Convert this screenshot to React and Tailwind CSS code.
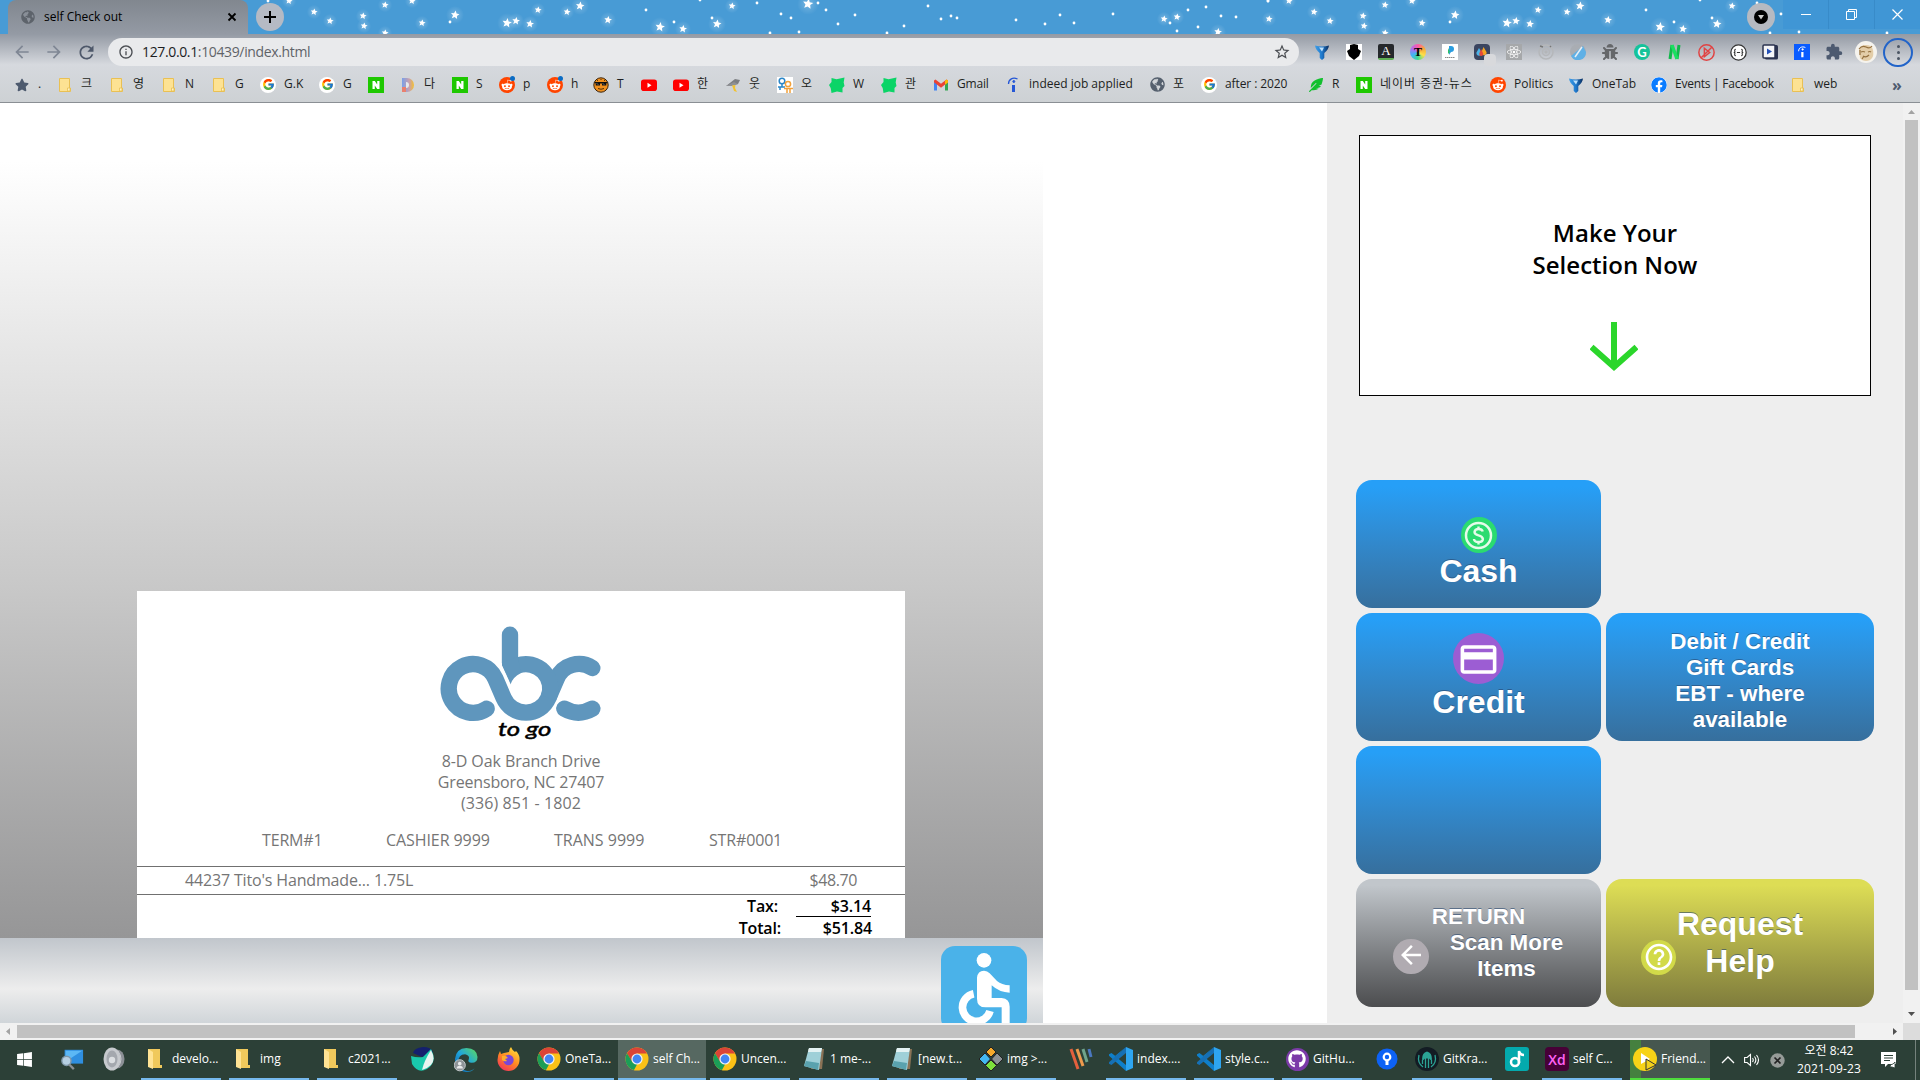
import React from "react";
import {
  FaRedditAlien, FaYoutube, FaFacebook, FaReact, FaPuzzlePiece, FaBug, FaGithub,
  FaFirefoxBrowser, FaEdge, FaGlobeAmericas, FaStar, FaFeatherAlt, FaWindows,
} from "react-icons/fa";
import { FcGoogle } from "react-icons/fc";
import { MdArrowBack, MdArrowForward, MdRefresh, MdCreditCard, MdExtension, MdHelpOutline, MdStarBorder, MdInfoOutline } from "react-icons/md";

const STARS = [
  [289, 1, 4], [314, 12, 4], [330, 21, 4], [363, 16, 4], [364, 26, 4], [385, 5, 4], [385, 33, 4], [412, 1, 4],
  [422, 23, 4], [455, 15, 5], [507, 23, 5.5], [516, 21, 4.5], [530, 24, 4.5], [538, 10, 4], [567, 12, 4], [580, 6, 5],
  [608, 20, 4.5], [660, 27, 5.5], [683, 29, 4.5], [717, 24, 5], [732, 6, 4], [808, 4, 6], [1164, 19, 4],
  [1177, 17, 4], [1218, 32, 4.5], [1269, 19, 4],
];
const DOTS = [
  [268, 1], [450, 22], [646, 10], [674, 22], [712, 18], [700, 0], [757, 3], [781, 14], [791, 18], [818, 3], [826, 10],
  [838, 24], [855, 15], [904, 26], [928, 6], [941, 19], [951, 16], [957, 18], [1016, 20], [1045, 24], [1060, 15],
  [1074, 23], [1113, 14], [1170, 23], [1177, 31], [1188, 10], [1198, 27], [1206, 7], [1221, 16], [1236, 17], [1268, 1],
  [770, 33], [799, 32], [887, 33],
];

const starPath = (cx, cy, r) => {
  let d = "";
  for (let i = 0; i < 10; i++) {
    const a = -Math.PI / 2 + 0.15 + (i * Math.PI) / 5;
    const q = i % 2 ? r * 0.46 : r;
    d += (i ? "L" : "M") + (cx + q * Math.cos(a)).toFixed(1) + " " + (cy + q * Math.sin(a)).toFixed(1);
  }
  return d + "Z";
};

function Sky() {
  return (
    <svg className="absolute inset-0" width="1920" height="34" viewBox="0 0 1920 34">
      <defs>
        <radialGradient id="glow">
          <stop offset="0" stopColor="#fff" stopOpacity=".25" />
          <stop offset="1" stopColor="#fff" stopOpacity="0" />
        </radialGradient>
      </defs>
      {[0, 1000].map((o) => (
        <g key={o} transform={`translate(${o} 0)`} fill="#fff">
          {STARS.map(([x, y, r]) => (
            <g key={x + "-" + y}>
              <circle cx={x} cy={y} r={r * 1.8} fill="url(#glow)" />
              <path d={starPath(x, y, r * 0.9)} />
            </g>
          ))}
          {DOTS.map(([x, y]) => <circle key={x} cx={x} cy={y} r="1.4" />)}
        </g>
      ))}
    </svg>
  );
}

/* ---------- small icons ---------- */
const Folder = () => (
  <svg width="16" height="16" viewBox="0 0 16 16">
    <path d="M2.5 1.500h10v9.500h1v3.500h-11z" fill="#fde293" stroke="#e9c054" />
    <path d="M10.500 14v-3h2.500v3z" fill="#fff3c4" stroke="#e9c054" strokeWidth=".8" />
  </svg>
);
const Google = () => <span className="flex size-4 items-center justify-center rounded-full bg-white"><FcGoogle size={13} /></span>;
const Naver = () => (
  <svg width="16" height="16" viewBox="0 0 16 16"><path d="M0 0h16v16H0z" fill="#1ec800" /><path d="M4.500 12V4h2.300l2.400 3.600V4h2.300v8H9.200L6.800 8.400V12z" fill="#fff" /></svg>
);
const Daum = () => (
  <svg width="16" height="16" viewBox="0 0 16 16">
    <defs><linearGradient id="dm"><stop offset="0" stopColor="#7aa0e8" /><stop offset=".6" stopColor="#c8a0b0" /><stop offset="1" stopColor="#f5c02c" /></linearGradient></defs>
    <path d="M2 1h5a7 7 0 0 1 0 14H2z" fill="url(#dm)" /><path d="M2 10h4v5H2z" fill="#e9806e" /><path d="M6 5v6a3 3 0 0 0 0-6z" fill="#e6e8ea" />
  </svg>
);
const Reddit = ({ dot }) => (
  <span className="relative flex size-4 items-center justify-center rounded-full bg-[#ff4500] text-white">
    <FaRedditAlien size={12} />
    {dot && <span className="absolute -top-px right-0 size-[5px] rounded-full bg-[#0b6cc4]" />}
  </span>
);
const Face = () => (
  <svg width="16" height="16" viewBox="0 0 16 16"><circle cx="8" cy="8" r="7.200" fill="#f0901e" stroke="#3b2208" strokeWidth="1" /><path d="M1.500 5h13v1.200h-1.200V8.500H9V6.500H7v2H2.700V6.200H1.500z" fill="#111" /><path d="m4 6.500 1 1m5-1 1 1" stroke="#fff" strokeWidth=".7" /><path d="M5 11.500q3 1.500 6 0M4 3l1 .8M8 2v1M12 3l-1 .8" stroke="#3b2208" fill="none" strokeWidth=".9" /></svg>
);
const YouTube = () => (
  <svg width="16" height="16" viewBox="0 0 16 16"><rect y="2.500" width="16" height="11.500" rx="2.800" fill="#f00" /><path d="M6.500 5.800v5l4-2.500z" fill="#fff" /></svg>
);
const Bird = () => (
  <svg width="16" height="16" viewBox="0 0 16 16"><path d="M1 9 10 2l5 1-2 4-4 1-4 0z" fill="#7d7f82" /><path d="m1 9 8-4 4 2-6 2z" fill="#8f9194" /><path d="m7 8.500 3.500-.5-.5 3 2 4-3-1-1-3z" fill="#f2c230" /></svg>
);
const OO = () => (
  <svg width="16" height="16" viewBox="0 0 16 16"><path d="M0 0h16v16H0z" fill="#fff" /><g fill="none" strokeWidth="1.500"><circle cx="5" cy="4" r="2.800" stroke="#2a86c8" /><path d="M5 7v3M1 10h7M3 10v3" stroke="#2a86c8" /><circle cx="11" cy="7" r="2.600" stroke="#f2a13a" /><path d="M7 11.500h9M10 12v4M13 12v4" stroke="#f2a13a" /></g></svg>
);
const GreenBlob = () => <svg width="16" height="16" viewBox="0 0 16 16"><path d="m2.500 1 5 1.200L15.500.5l-.8 5 .8 3.500-2 2v4.500L8 14.500 2.500 16l-.8-5L0 8l2.500-3z" fill="#0bd467" /></svg>;
const Gmail = () => (
  <svg width="16" height="16" viewBox="0 0 16 16"><path d="M1 4v9.500h3V7z" fill="#4285f4" /><path d="M15 4v9.500h-3V7z" fill="#34a853" /><path d="M1 3.500 2.500 2.500 8 6.800l5.500-4.300L15 3.500v1.800l-7 5.500-7-5.500z" fill="#ea4335" /><path d="M12 3.700 13.500 2.500 15 3.500v2L12 7.700z" fill="#fbbc04" /></svg>
);
const Indeed = ({ light }) => (
  <svg width="16" height="16" viewBox="0 0 16 16">
    {light && <path d="M0 0h16v16H0z" fill="#0a5cff" />}
    <g stroke={light ? "#fff" : "#2557d6"} fill="none" transform={light ? "translate(2 2) scale(.75)" : undefined}><path d="M8.500 8v7" strokeWidth="3" /><path d="M3.500 7C3.500 2 8 0 12.500 2" strokeWidth="1.300" /><circle cx="8.800" cy="4.500" r="1" fill={light ? "#fff" : "#2557d6"} /></g>
  </svg>
);
const OneTab = () => (
  <svg width="16" height="16" viewBox="0 0 16 16"><defs><linearGradient id="ot"><stop offset="0" stopColor="#3f9fe8" /><stop offset=".5" stopColor="#1e78cc" /><stop offset="1" stopColor="#0a2c5c" /></linearGradient></defs><path d="M1 1.500Q8 3.500 15 1.500q-.5 4-4.700 7.500v5L8 16l-2.300-2V9Q1.500 5.500 1 1.500z" fill="url(#ot)" /><path d="M5 3.500h5L8 7.500z" fill="#bfe2fb" /></svg>
);
const Chrome = () => (
  <svg width="24" height="24" viewBox="0 0 24 24">
    <circle cx="12" cy="12" r="11.500" fill="#fbc116" /><path d="M2 6.300a11.500 11.500 0 0 1 20 .2H12l-5 8.500z" fill="#db4437" /><path d="M2 6.300 7.300 15l4.700 2.500-3 5.600A11.500 11.500 0 0 1 2 6.300z" fill="#1b9e58" />
    <circle cx="12" cy="12" r="5.600" fill="#f3f3f3" /><circle cx="12" cy="12" r="4.400" fill="#4285f4" />
  </svg>
);

/* ---------- browser chrome ---------- */
const bookmarks = [
  ["w-[43px]", <FaStar size={14} color="#4d5a6e" />, "."],
  ["w-[52px]", <Folder />, "크"], ["w-[52px]", <Folder />, "영"], ["w-[50px]", <Folder />, "N"], ["w-[49px]", <Folder />, "G"],
  ["w-[59px]", <Google />, "G.K"], ["w-[49px]", <Google />, "G"], ["w-[32px]", <Naver />, ""], ["w-[52px]", <Daum />, "다"],
  ["w-[47px]", <Naver />, "S"], ["w-[48px]", <Reddit dot />, "p"], ["w-[46px]", <Reddit dot />, "h"], ["w-[48px]", <Face />, "T"],
  ["w-[32px]", <YouTube />, ""], ["w-[52px]", <YouTube />, "한"], ["w-[52px]", <Bird />, "웃"], ["w-[52px]", <OO />, "오"],
  ["w-[52px]", <GreenBlob />, "W"], ["w-[52px]", <GreenBlob />, "관"], ["w-[72px]", <Gmail />, "Gmail", "-tracking-[0.2px]"],
  ["w-[144px]", <Indeed />, "indeed job applied"], ["w-[52px]", <FaGlobeAmericas size={15} color="#55606e" />, "포"],
  ["w-[107px]", <Google />, "after : 2020", "-tracking-[0.1px]"], ["w-[48px]", <FaFeatherAlt size={14} color="#12c02e" />, "R"],
  ["w-[134px]", <Naver />, "네이버 증권-뉴스", "tracking-[0.95px]"], ["w-[78px]", <Reddit />, "Politics"], ["w-[83px]", <OneTab />, "OneTab"],
  ["w-[139px]", <FaFacebook size={16} color="#0a7cff" className="rounded-full bg-white" />, "Events | Facebook", "tracking-[-0.25px]"], ["w-[80px]", <Folder />, "web"],
];

const ext = [
  <OneTab />,
  <svg width="16" height="16" viewBox="0 0 16 16"><path d="M0 0h16v16H0z" fill="#fff" /><path d="m4 1 4-1 4 1v4l3 2-2 5-5 4-5-4-2-5 3-2z" /></svg>,
  <span className="flex size-4 items-start justify-center rounded-xs border-b-2 border-[#5fae54] bg-[#25282c] font-['Liberation_Serif'] text-[13px] leading-[13px] text-white">A</span>,
  <span className="flex size-4 items-center justify-center rounded-full bg-[conic-gradient(#ff5aa8,#f7a93a,#ffe04a,#41d98f,#3fb6f5,#b36cf0,#ff5aa8)] font-['Liberation_Serif'] text-[12px] font-bold leading-4">T</span>,
  <svg width="16" height="16" viewBox="0 0 16 16"><path d="M0 0h16v16H0z" fill="#fff" /><path d="M7 2h2a3 3 0 0 1 0 6l-2 3z" fill="#2a9de0" /><path d="M6 4v6l2-2z" fill="#2fc06a" /><path d="M3 13.500h10" stroke="#888" strokeDasharray="1.500 .5" /></svg>,
  <span className="relative size-4 rounded-sm bg-[#3b4560]"><svg width="16" height="16" viewBox="0 0 16 16"><path d="M5 4 2.500 8.500a2.600 2.600 0 1 0 5 0z" fill="#4cb4e8" /><path d="M9.500 3 7.500 8a2.600 2.600 0 1 0 5 0z" fill="#f5a524" /><path d="M7 5 5.500 9a2 2 0 1 0 3.500 0z" fill="#e64a3a" /></svg><span className="absolute left-2.5 top-2.5 h-3 w-3 rounded-sm bg-[#d8d9dc]" /></span>,
  <span className="flex size-4 items-center justify-center bg-[#a6a8aa] text-white"><FaReact size={14} /></span>,
  <svg width="16" height="16" viewBox="0 0 16 16" fill="none" stroke="#b5b7ba" strokeWidth="1.500"><circle cx="8" cy="8" r="7" /><circle cx="8" cy="8" r="3.500" /><circle cx="8" cy="8" r="1" fill="#888" /><path d="m2 2 3 1M12 3l1-1" stroke="#777" /></svg>,
  <svg width="16" height="16" viewBox="0 0 16 16"><circle cx="8" cy="8" r="8" fill="#a9adb3" /><path d="M1 12 13 2l3 6a8 8 0 0 1-15 4z" fill="#5fb0e6" /><path d="M5 13 12 3" stroke="#e7eef4" strokeWidth="1.500" /></svg>,
  <FaBug size={16} color="#65676a" />,
  <span className="flex size-4 items-center justify-center rounded-full bg-[#15c39a] font-['Lato'] text-[13px] font-bold leading-4 text-white">G</span>,
  <svg width="16" height="16" viewBox="0 0 16 16" fill="none"><path d="M4 15 6 1M11 15l2-14" stroke="#10b84a" strokeWidth="3" /><path d="m6 1 5 14" stroke="#19e060" strokeWidth="3.400" /></svg>,
  <svg width="17" height="17" viewBox="0 0 16 16" fill="none" stroke="#e04444" strokeWidth="1.400"><circle cx="8" cy="8" r="7.200" /><path d="M3 13 13 3M6 4v8l5-4z" /></svg>,
  <svg width="17" height="17" viewBox="0 0 16 16" fill="none" stroke="#333" strokeWidth="1.200"><circle cx="8" cy="8" r="7.200" fill="#fff" /><path d="M5.500 5Q4 5 4.500 6.500T3.500 8Q5 8 4.500 9.500T5.500 11M10.500 5q1.500 0 1 1.500t1 1.500Q11 8 11.500 9.500t-1 1.500M6.500 8h3" strokeWidth="1" /></svg>,
  <svg width="16" height="16" viewBox="0 0 16 16"><rect x="3" y="1" width="13" height="14.500" rx="1.500" fill="#2b3350" /><rect x="1" y="1" width="12" height="13" rx="1" fill="#f4f5f8" stroke="#2b3350" strokeWidth="1.500" /><path d="M5 4.500v6l5-3z" fill="#2451b8" /></svg>,
  <Indeed light />,
  <MdExtension size={18} color="#4d5a70" />,
  <svg width="22" height="22" viewBox="0 0 22 22"><circle cx="11" cy="11" r="11" fill="#f5f3ee" /><path d="M4 9q1-5 7-5t7 5-1 8-6 3-6-3z" fill="#e3cda8" /><path d="M4 8q3-4 7-2t6-1M6 11q2-1 4 0m3 0q2-1 3 0M8 15q3 2 6-1M7 18l2-3M5 9v5" stroke="#94703f" fill="none" strokeWidth="1.200" /></svg>,
  <span className="flex h-[29px] w-[30px] flex-col items-center justify-center gap-[3px] rounded-full border-2 border-[#2264c9]"><i className="size-[3px] rounded-full bg-[#4b5563]" /><i className="size-[3px] rounded-full bg-[#4b5563]" /><i className="size-[3px] rounded-full bg-[#4b5563]" /></span>,
];

function TabStrip() {
  return (
    <div className="relative h-[34px] bg-[#489bd5]">
      <Sky />
      <div className="relative flex h-full items-center">
        <div className="ml-2 flex h-full w-60 items-center rounded-t-lg bg-linear-to-b from-[#81878f] to-[#949aa4] pl-[13px] pr-[10px]">
          <FaGlobeAmericas size={14} color="#5d636b" />
          <span className="ml-[9px] grow text-[12px]">self Check out</span>
          <svg width="12" height="12" viewBox="0 0 12 12"><path d="m2.500 2.500 7 7m0-7-7 7" stroke="#000" strokeWidth="1.800" /></svg>
        </div>
        <div className="ml-2 flex size-7 items-center justify-center rounded-full bg-[#b5bac4]">
          <svg width="14" height="14" viewBox="0 0 14 14"><path d="M7 1v12M1 7h12" stroke="#000" strokeWidth="2" /></svg>
        </div>
        <div className="grow" />
        <div className="mr-2 flex size-7 items-center justify-center rounded-full bg-[#b7bac1]">
          <svg width="14" height="14" viewBox="0 0 14 14"><circle cx="7" cy="7" r="7" /><path d="M4 5h6l-3 4.500z" fill="#ccc" /></svg>
        </div>
        <div className="flex h-[29px] items-center self-start bg-[#4096d5]">
          <div className="flex h-full w-[46px] items-center justify-center border-r border-[#388bc9]"><span className="h-px w-[10px] bg-white" /></div>
          <div className="flex h-full w-[46px] items-center justify-center border-r border-[#388bc9]">
            <svg width="11" height="11" viewBox="0 0 11 11" fill="none" stroke="#fff"><path d="M.5 2.500h8v8h-8zM2.500 2.500v-2h8v8h-2" /></svg>
          </div>
          <div className="flex h-full w-[45px] items-center justify-center"><svg width="11" height="11" viewBox="0 0 11 11" stroke="#fff" strokeWidth="1.200"><path d="m.5.5 10 10m0-10-10 10" /></svg></div>
        </div>
      </div>
    </div>
  );
}

function Toolbar() {
  return (
    <div className="flex h-[69px] flex-col border-b border-[#8a8f94] bg-linear-to-b from-[#949aa4] via-[#d6d9de] via-45% to-[#cdd1d4]">
      <div className="flex h-9 items-center">
        <div className="flex w-[108px] items-center pl-3">
          <MdArrowBack size={20} color="#7f8794" /><MdArrowForward size={20} color="#7f8794" className="ml-3" /><MdRefresh size={21} color="#4e586a" className="ml-3" />
        </div>
        <div className="flex h-7 w-[1191px] items-center rounded-full bg-[#e9eaec] pl-[10px] pr-2">
          <MdInfoOutline size={16} color="#4a4d52" />
          <span className="mb-px ml-2 grow text-[14px] tracking-[-0.36px] text-[#5f6368]"><span className="text-[#1c1d1f]">127.0.0.1</span>:10439/index.html</span>
          <MdStarBorder size={18} color="#4a4d52" />
        </div>
        <div className="ml-[7px] flex">
          {ext.map((e, i) => <div key={i} className="flex h-[30px] w-8 items-center justify-center">{e}</div>)}
        </div>
      </div>
      <div className="flex h-[29px] items-center pl-[14px] text-[12px] text-[#1d1f22]">
        {bookmarks.map(([w, icon, label, extra], i) => (
          <div key={i} className={`flex shrink-0 items-center gap-2 whitespace-nowrap ${w} ${extra || ""}`}>
            <span className="flex size-4 shrink-0 items-center justify-center">{icon}</span>
            <span className="pb-px">{label}</span>
          </div>
        ))}
        <span className="ml-[22px] text-[16px] font-bold leading-4 text-[#4d5a6e]">»</span>
      </div>
    </div>
  );
}

/* ---------- receipt ---------- */
function Logo() {
  return (
    <svg width="180" height="135" viewBox="0 0 540 405" className="block">
      <g fill="none" stroke="#5f96bd" strokeWidth="49" strokeLinecap="round">
        <path d="M170 278A73 73 0 1 1 196 188L221 246A73 73 0 0 0 355 246L380 188A73 73 0 0 1 487 156" />
        <path d="M403 278Q445 302 487 278" />
        <path d="M262 149A73 73 0 0 1 355 246" strokeLinecap="butt" />
        <path d="M240 56V140" />
      </g>
      <path d="M216 140V150L241 206Q250 182 272 172L264 122Z" fill="#5f96bd" />
      <path d="M212 146 243 213" stroke="#fff" strokeWidth="5" />
      <text x="204" y="360" fontFamily="'Lato', sans-serif" fontStyle="italic" fontWeight="400" fontSize="60" stroke="#000" strokeWidth="1.500" textLength="160" lengthAdjust="spacingAndGlyphs">to go</text>
    </svg>
  );
}

function Receipt() {
  return (
    <div className="ml-[137px] h-[347px] w-[768px] shrink-0 overflow-hidden bg-white text-[16px] leading-[21px] tracking-[-0.16px] text-[#757575]">
      <div className="flex flex-col items-center pt-[25px]">
        <div className="-ml-[2px] h-[135px]"><Logo /></div>
        <span className="tracking-[-0.08px]">8-D Oak Branch Drive</span>
        <span>Greensboro, NC 27407</span>
        <span className="tracking-[0.1px]">(336) 851 - 1802</span>
      </div>
      <div className="mt-4 flex h-[36px] pl-[125px]">
        <span className="w-[124px]">TERM#1</span>
        <span className="w-[168px] tracking-[-0.08px]">CASHIER 9999</span>
        <span className="w-[155px] tracking-normal">TRANS 9999</span>
        <span>STR#0001</span>
      </div>
      <div className="flex h-[29px] items-center justify-between border-y border-[#707070] pl-12 pr-12">
        <span>44237 Tito's Handmade... 1.75L</span><span className="tracking-[-0.4px]">$48.70</span>
      </div>
      <div className="flex justify-end pr-[34px] font-semibold text-black">
        <span className="pt-px">Tax:</span>
        <span className="ml-[18px] h-[22px] w-[75px] border-b border-black pt-px text-right">$3.14</span>
      </div>
      <div className="flex justify-end pr-[33px] pt-px font-semibold text-black">
        <span>Total:</span><span className="ml-4 w-[75px] text-right">$51.84</span>
      </div>
    </div>
  );
}

function Wheelchair() {
  return (
    <svg width="86" height="78" viewBox="33 33 258 234" className="block">
      <rect x="33" y="33" width="258" height="258" rx="42" fill="#4ab2e9" />
      <circle cx="162" cy="76" r="22" fill="#fff" />
      <path d="M141 128q2-21 21-21 10 0 17 8l22 23q14 12 38 13v22q-30 0-54-22v38h30q24 2 24 26v60h-24v-58h-48q-26 0-26-26z" fill="#fff" />
      <path d="M131 176A42 42 0 1 0 180 228" fill="none" stroke="#fff" strokeWidth="23" />
    </svg>
  );
}

/* ---------- side panel ---------- */
const btn = "flex flex-col items-center justify-center rounded-2xl font-['Liberation_Sans'] font-bold text-white [text-shadow:0_-1px_0_rgba(40,70,110,.6)]";
const blue = "bg-linear-to-b from-[#269ff7] from-5% to-[#366f9d]";

function SidePanel() {
  return (
    <div className="w-[576px] bg-[#eee] pl-[29px] pt-8">
      <div className="ml-[3px] flex h-[261px] w-[512px] flex-col items-center border border-black bg-white pt-[81px] text-[24px] font-semibold leading-8 text-black">
        <span>Make Your</span><span>Selection Now</span>
        <svg width="48" height="49" viewBox="0 0 48 49" className="mt-[41px] -ml-[2px]"><path d="M24 0v44M1.500 25 24 45l22.500-20" fill="none" stroke="#2bd62b" strokeWidth="6" /></svg>
      </div>
      <div className="mt-[84px] grid grid-cols-[245px_268px] auto-rows-[128px] gap-[5px] text-[32px] leading-[37px]">
        <div className={`${btn} ${blue} pt-[19px]`}>
          <svg width="36" height="36" viewBox="0 0 36 36"><circle cx="18" cy="18" r="18" fill="#2bdb70" /><circle cx="17.500" cy="18.500" r="12.500" fill="none" stroke="#e6fbea" strokeWidth="2.500" /><path d="M21.800 14.500Q21 12 17.500 12T13.500 15q0 2.500 4 3.400t4.400 3.600q0 3-4.400 3t-4.500-3M17.500 9.500V12M17.500 25v2.500" fill="none" stroke="#e6fbea" strokeWidth="2.400" /></svg>
          <span>Cash</span>
        </div>
        <div />
        <div className={`${btn} ${blue}`}>
          <span className="flex size-[51px] items-center justify-center rounded-full bg-[#9c5dd3] pt-0.5"><MdCreditCard size={43} /></span>
          <span>Credit</span>
        </div>
        <div className={`${btn} ${blue} pt-2 text-[22.4px] leading-[26px]`}>
          <span>Debit / Credit</span><span>Gift Cards</span><span>EBT - where</span><span>available</span>
        </div>
        <div className={`${btn} ${blue}`} />
        <div />
        <div className={`${btn} relative bg-linear-to-b from-[#c1c6cb] from-5% to-[#4c4d4f] text-[22.4px] leading-[26px]`}>
          <span>RETURN</span><span className="ml-[56px]">Scan More</span><span className="ml-[56px]">Items</span>
          <span className="absolute left-[37px] top-[60px] flex h-[35px] w-9 items-center justify-center rounded-full bg-[#b0abb1] pb-[3px]"><MdArrowBack size={30} /></span>
        </div>
        <div className={`${btn} relative bg-linear-to-b from-[#dddd55] from-5% to-[#7f7c3c]`}>
          <span>Request</span><span>Help</span>
          <span className="absolute left-[35px] top-[61px] flex size-[35px] items-center justify-center rounded-full bg-[#d2da49] pb-px"><MdHelpOutline size={32} /></span>
        </div>
      </div>
    </div>
  );
}

const Tri = ({ d, c }) => <svg width="17" height="17" viewBox="0 0 17 17"><path d={d} fill={c} /></svg>;

/* ---------- task bar ---------- */
const TFolder = () => <svg width="16" height="22" viewBox="0 0 16 22" className="mr-0.5"><path d="M1 1h12v16h2v3H4z" fill="#f0c95c" /><path d="M1 1l5 3v17l-5-2z" fill="#ffe394" /></svg>;
const Notepad = () => <svg width="24" height="24" viewBox="0 0 24 24"><path d="M6 2h16l-2 20H9z" fill="#8a7256" /><path d="M7 1h13l-3 22-15-4z" fill="#9fd0d8" /><path d="m7 1 13 0-1 4-13 0z" fill="#e3f2f3" /><path d="M4 14 17 16l-1 7-14-4z" fill="#5aa2ae" /></svg>;
const VSCode = () => <svg width="24" height="24" viewBox="0 0 24 24"><path d="M17 0 7 9.500 2.500 6 0 7.300v1.500l17 15.200V18L6 9z" fill="#0f7fcb" /><path d="M17 0v6L2.500 18 0 16.700v-1.500z" fill="#1670b5" /><path d="m17 0 7 3v18l-7 3z" fill="#2ea5f0" /></svg>;

const tasks = [
  ["w-12", <FaWindows size={17} color="#fff" />],
  ["w-12", <svg width="26" height="26" viewBox="0 0 26 26"><path d="M5 3h20v15H5z" fill="#2f8fe0" /><path d="M6 4h18L6 16z" fill="#5cb8f5" /><circle cx="7" cy="15" r="5" fill="#b6cfe2" stroke="#7f97a8" strokeWidth="1.500" /><path d="m10 19 5 5" stroke="#8c8f93" strokeWidth="2.500" /></svg>],
  ["w-9", <svg width="22" height="24" viewBox="0 0 22 24"><ellipse cx="14" cy="12" rx="7.500" ry="9.500" fill="#8c9096" /><path d="M15 4q6 8 0 16M12 3q6 9 0 18" stroke="#c7cace" fill="none" /><ellipse cx="9" cy="12" rx="8.500" ry="11.500" fill="#c7cace" /><ellipse cx="9" cy="12" rx="5.500" ry="8.500" fill="#a4a8ae" /><circle cx="9" cy="13" r="3.200" fill="#dcdfe2" /></svg>],
  ["w-20 ml-[9px]", <TFolder />, "develo..."], ["w-20 ml-2", <TFolder />, "img"], ["w-20 ml-2", <TFolder />, "c2021..."],
  ["w-[43px] ml-1", <svg width="24" height="24" viewBox="0 0 24 24"><path d="M2 6Q3 1 12 0q8 0 10 5L11 10z" fill="#14206e" /><path d="M0 9q6 2 12 1l8-8q7 13-4 20-9 5-15-5z" fill="#19c9ac" /><path d="M20 3q8 15-9 20 2-9 9-20z" fill="#e9f4f0" /></svg>],
  ["w-[43px]", <svg width="25" height="25" viewBox="0 0 25 25"><defs><linearGradient id="eg" x1="0" y1="1" x2="1" y2="0"><stop offset="0" stopColor="#0c59a4" /><stop offset=".5" stopColor="#1fa5dc" /><stop offset="1" stopColor="#5fdc5a" /></linearGradient></defs><path d="M1 12Q2 1 13 .5 24 1 24.500 10q0 6-6 6-5-.5-3-4 1-4-4-5-7 0-7 8 1 7 9 9.500 5 0 8-3-3 4-9 4Q1 24 1 12z" fill="url(#eg)" /><circle cx="6" cy="18.500" r="5.800" fill="#8e9498" stroke="#c4cacc" /><circle cx="6" cy="16.800" r="1.900" fill="#e7e9ea" /><path d="M2.700 22q0-3 3.300-3t3.300 3z" fill="#e7e9ea" /></svg>],
  ["w-[43px]", <svg width="23" height="24" viewBox="0 0 23 24"><defs><linearGradient id="fx" x1=".8" y1="0" x2=".2" y2="1"><stop offset="0" stopColor="#ffe03a" /><stop offset=".5" stopColor="#ff8a22" /><stop offset="1" stopColor="#f2305c" /></linearGradient></defs><path d="M3 4l1 3 3-1 5-1q0-3 2-5 1 3 4 5l1-1q4 4 3.500 9a11 11 0 0 1-22 0Q.5 8 3 4z" fill="url(#fx)" /><circle cx="11.500" cy="13" r="5.200" fill="#7a46d6" /><path d="M5 9q4-1 6 2l-3 1 2 2q-3 1-5-1z" fill="#ffae2a" /></svg>],
  ["w-20 ml-1", <Chrome />, "OneTa..."], ["w-[88px] ml-1", <Chrome />, "self Ch...", "bg-[#566861] pl-[7px]"], ["w-20 ml-1", <Chrome />, "Uncen..."],
  ["w-20 ml-[9px]", <Notepad />, "1 me-..."], ["w-20 ml-2", <Notepad />, "[new.t..."],
  ["w-20 ml-[9px]", <svg width="24" height="24" viewBox="0 0 24 24" stroke="#222"><path d="m12 0 5 5-5 5-5-5z" fill="#f5a92c" /><path d="m6 6 5.500 6L6 18 0 12z" fill="#43b7f2" /><path d="m18 6 6 6-6 6-5.500-6z" fill="#8c9296" /><path d="m12 13 5.500 5.500L12 24l-5.500-5.500z" fill="#7de03c" /></svg>, "img >..."],
  ["w-[43px] ml-[3px]", <svg width="24" height="24" viewBox="0 0 24 24" strokeWidth="3" fill="none"><path d="m2 2 7 20" stroke="#e5603d" /><path d="m8 2 6 17" stroke="#ee9a4d" /><path d="m14 2 4 13" stroke="#6fa48c" /><path d="m20 2 2 8" stroke="#4b78c0" /></svg>],
  ["w-20 ml-1", <VSCode />, "index...."], ["w-20 ml-2", <VSCode />, "style.c..."],
  ["w-20 ml-2", <span className="flex size-[23px] items-center justify-center rounded-full bg-[#7b3aa8] text-white"><FaGithub size={18} /></span>, "GitHu..."],
  ["w-[43px] ml-[3px]", <svg width="22" height="22" viewBox="0 0 22 22"><circle cx="11" cy="11" r="10.500" fill="#0d62f5" /><circle cx="11" cy="9" r="3.300" fill="none" stroke="#fff" strokeWidth="2.200" /><path d="M11 12v5" stroke="#fff" strokeWidth="3" /></svg>],
  ["w-20 ml-1", <svg width="24" height="24" viewBox="0 0 24 24" fill="none"><circle cx="12" cy="12" r="12" fill="#131c24" /><path d="M7 12.500q0-7 5-8 5 1 5 8-1 1-2 0l-1-1h-4l-1 1q-1 1-2 0" fill="#2ba395" /><path d="M10.500 11v10m3-10v10M4 8q-2 8 4 12M20 8q2 8-4 12M7.500 13v4M16.500 13v4" stroke="#2ba395" strokeWidth="1.300" /></svg>, "GitKra..."],
  ["w-[43px] ml-[3px]", <svg width="24" height="24" viewBox="0 0 24 24" fill="none"><rect width="24" height="24" rx="3" fill="#04aaad" /><circle cx="10" cy="15" r="4" stroke="#fff" strokeWidth="2.500" /><path d="M14 16V4q1 4 5 4" stroke="#fff" strokeWidth="2.500" /></svg>],
  ["w-20 ml-1", <span className="flex size-6 items-center justify-center rounded-sm bg-[#470137] text-[14px] font-semibold text-[#ff61f6]">Xd</span>, "self C..."],
  ["w-20 ml-2", <svg width="24" height="24" viewBox="0 0 24 24"><circle cx="12" cy="12" r="12" fill="#f7d317" /><path d="M8 6v11l9-5z" fill="#fff" /><path d="m13 12 10 6-10 5z" fill="#f2d21c" stroke="#333" /></svg>, "Friend...", "pl-[3px] bg-linear-to-r from-[#45803f] from-14% to-[#46574f] to-14%", "bg-[#4fdc3d]"],
];

function Taskbar() {
  return (
    <div className="flex h-10 bg-[#2c4037] text-[12px] text-white">
      {tasks.map(([w, icon, label, bg, line], i) => (
        <div key={i} className={`flex shrink-0 flex-col ${w}`}>
          <div className={`flex h-[38px] items-center whitespace-nowrap ${label ? "gap-1" : "justify-center"} ${bg || (label ? "pl-[3px]" : "")}`}>
            <span className="flex w-6 shrink-0 justify-center">{icon}</span>{label}
          </div>
          {label && <div className={`h-0.5 ${line || "bg-[#76b9ed]"}`} />}
        </div>
      ))}
      <div className="ml-[11px] flex items-center">
        <svg width="14" height="8" viewBox="0 0 14 8"><path d="m1 7 6-6 6 6" fill="none" stroke="#fff" strokeWidth="1.300" /></svg>
        <svg width="16" height="16" viewBox="0 0 16 16" fill="none" stroke="#fff" strokeWidth="1.100" className="ml-[9px]"><path d="M.6 5.500h2.500L6.500 2.500v11l-3.400-3H.6zM8.500 6q1.500 2 0 4M10.500 4.500q2.700 3.500 0 7M12.500 3q4 5 0 10" /></svg>
        <svg width="15" height="15" viewBox="0 0 15 15" className="ml-[10px]"><circle cx="7.500" cy="7.500" r="7.200" fill="#969b98" /><path d="m4.500 4.500 6 6m0-6-6 6" stroke="#222" strokeWidth="1.700" /></svg>
        <div className="ml-2 flex w-[72px] flex-col items-center whitespace-nowrap leading-[18px]"><span>오전 8:42</span><span className="tracking-[0.15px]">2021-09-23</span></div>
        <svg width="18" height="18" viewBox="0 0 18 18" className="ml-[15px]"><path d="M1 1h15v12H8l-3 3v-3H1z" fill="#fff" /><path d="M4 4.500h9M4 7h9M4 9.500h6" stroke="#2c4037" /><path d="M10 16q0-3 3-3l2-2v6l-3-1z" fill="#fff" stroke="#2c4037" strokeWidth=".8" /></svg>
      </div>
      <div className="ml-auto mr-1 h-full w-px bg-[#75827c]" />
    </div>
  );
}

export default function App() {
  return (
    <div className="flex h-[1080px] w-[1920px] flex-col overflow-hidden bg-white font-['Open_Sans','Noto_Sans_CJK_KR',sans-serif] text-black">
      <TabStrip />
      <Toolbar />
      <div className="flex h-[920px]">
        <div className="flex w-[1043px] flex-col">
          <div className="flex h-[835px] flex-col bg-linear-to-b from-white from-7% via-[#c8c8c8] via-58% to-[#969697]">
            <div className="h-[488px] shrink-0" />
            <Receipt />
          </div>
          <div className="flex h-[85px] justify-end overflow-hidden bg-linear-to-b from-[#c1c6cc] via-[#ededed] via-60% to-[#d0d5d9] pr-4 pt-2">
            <Wheelchair />
          </div>
        </div>
        <div className="w-[284px]" />
        <SidePanel />
        <div className="flex w-[17px] flex-col items-center bg-[#f1f1f1]">
          <Tri d="M8.500 7 12 11H5z" c="#a3a3a3" />
          <div className="h-[870px] w-[13px] bg-[#c1c1c1]" />
          <div className="grow" />
          <Tri d="M5 6h7l-3.500 4z" c="#505050" />
        </div>
      </div>
      <div className="flex h-[17px] items-center bg-[#f1f1f1]">
        <Tri d="M6 8.500 10 5v7z" c="#a3a3a3" />
        <div className="h-[13px] w-[1838px] bg-[#c1c1c1]" />
        <div className="grow" />
        <Tri d="M7 5l4 3.500L7 12z" c="#505050" />
        <div className="h-full w-[17px] bg-[#dcdcdc]" />
      </div>
      <Taskbar />
    </div>
  );
}
